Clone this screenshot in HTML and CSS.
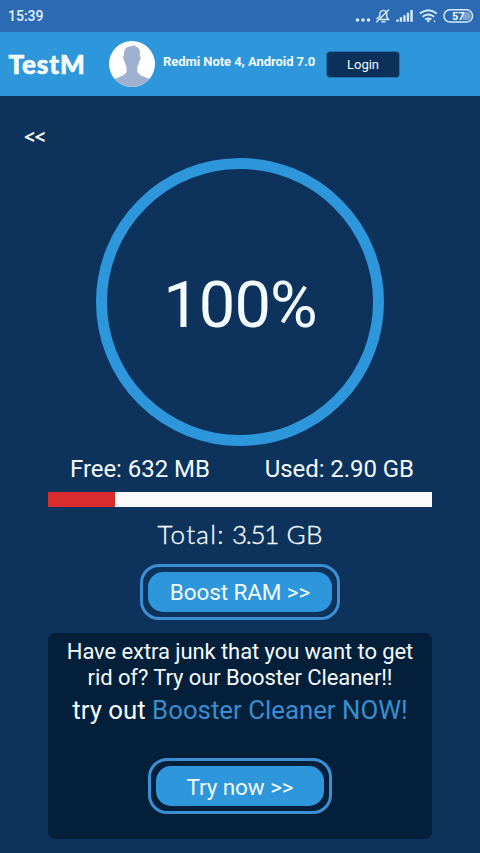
FILE: index.html
```html
<!DOCTYPE html>
<html lang="en">
<head>
<meta charset="utf-8">
<title>TestM</title>
<link rel="stylesheet" href="styles.css">
</head>
<body>
<div class="status">
  <span class="clock">15:39</span>
  <svg class="status-icons" width="120" height="32" viewBox="0 0 120 32" fill="none" stroke="#d5ecfb" stroke-width="1.5">
    <g fill="#d5ecfb" stroke="none"><circle cx="-0.500" cy="20" r="1.800"/><circle cx="5" cy="20" r="1.800"/><circle cx="10.500" cy="20" r="1.800"/></g>
    <path stroke-width="1.400" d="M22 19.500h8.500l-1.800-2.500v-3c0-2-1.200-3.400-3-3.600q-3.800.2-4 4v3.200M23.500 21.800h4M18.300 22.300L31 9.500M18.500 19.300l2.500-2.500"/>
    <g fill="#d5ecfb" stroke="none"><path d="M38.300 19.500h2.500v2.300h-2.500zM41.800 17.300h2.300v4.500h-2.300zM45.300 15.200h2.300v6.600h-2.300zM48.800 12.700h2.300v9.100h-2.300zM52.300 10h2.500v11.800h-2.500z"/></g>
    <path stroke-width="1.900" d="M61.800 13.600q8.500-6.800 17 0M64.500 16.800q5.800-4.600 11.600 0M67.200 19.600q3.100-2.200 6.200 0"/>
    <circle cx="70.300" cy="21" r="1.300" fill="#d5ecfb" stroke="none"/>
    <path stroke-width="1.200" d="M76.500 20.500v1.800"/>
    <rect x="86" y="9.800" width="28.500" height="12.200" rx="6"/>
    <path d="M105 12h5.500q2.500 1.500 2.500 4t-2.500 4H105z" fill="#7fa6d3" stroke="none"/>
    <text class="battery" x="94" y="20">57</text>
  </svg>
</div>
<header class="header">
  <div class="logo">TestM</div>
  <svg class="avatar" width="46" height="46" viewBox="0 0 46 46">
    <defs><clipPath id="disc"><circle cx="23" cy="23" r="23"/></clipPath></defs>
    <circle cx="23" cy="23" r="23" fill="#fff"/>
    <path clip-path="url(#disc)" fill="#9fb1d0" d="M15 14C14.500 8 18 5.500 22 5.300L26.500 4l-.3 1.400C30 6 31.500 9 30.800 15c1.200.4.8 3.500-.4 5-.6 2.800-1.300 4.600-2 5.500v5.500c2 4 8.500 5 12.500 7L46 46H0l5.500-8c4-2 10-3 12-7v-5.500c-.9-1.200-1.500-3-2-5.500-1.300-1-1.800-4.500-.5-6z"/>
  </svg>
  <div class="device">Redmi Note 4, Android 7.0</div>
  <div class="login">Login</div>
</header>
<main class="main">
  <div class="back">&lt;&lt;</div>
  <div class="ring"><span class="percent">100%</span></div>
  <div class="stats"><span class="free">Free: 632 MB</span><span class="used">Used: 2.90 GB</span></div>
  <div class="bar"><div class="fill"></div></div>
  <div class="total"><span class="label">Total:</span> <span class="amount">3.51</span> GB</div>
  <div class="button boost"><div class="face">Boost RAM &gt;&gt;</div></div>
  <section class="card">
    <p class="pitch">Have extra junk that you want to get<br>rid of? Try our Booster Cleaner!!</p>
    <p class="tryout">try out <span class="accent">Booster Cleaner NOW!</span></p>
    <div class="button try"><div class="face">Try now &gt;&gt;</div></div>
  </section>
</main>
</body>
</html>
```
FILE: styles.css
```css
* { box-sizing: border-box; }
body {
  margin: 0;
  width: 480px;
  height: 853px;
  overflow: hidden;
  background: #0d325b;
  color: #f4fbff;
  font-family: Roboto, sans-serif;
}
.status {
  display: flex;
  justify-content: space-between;
  height: 32px;
  padding: 0 2px 0 8px;
  background: #2c6ab4;
}
.clock { font-size: 14px; font-weight: 500; line-height: 33px; color: #e0f3ff; }
.status-icons { display: block; overflow: visible; }
.battery { font: 700 11px Roboto, sans-serif; fill: #f4fbff; stroke: none; }
.header {
  display: flex;
  align-items: center;
  height: 64px;
  padding-left: 8px;
  background: #2e96db;
}
.logo {
  width: 101px;
  padding-left: 0.5px;
  font: 900 26px/64px Lato, sans-serif;
  letter-spacing: 0.9px;
  -webkit-text-stroke: 0.6px #f4fbff;
  white-space: nowrap;
}
.avatar { display: block; flex: none; }
.device {
  width: 171px;
  padding: 0 0 5px 8px;
  font-size: 13px;
  font-weight: 700;
  letter-spacing: -0.05px;
  white-space: nowrap;
}
.login {
  width: 74px;
  height: 27px;
  border: 1px solid #2472ae;
  border-radius: 4px;
  background: #0b315b;
  font-size: 13px;
  line-height: 26px;
  text-align: center;
}
.main { display: flex; flex-direction: column; align-items: center; }
.back {
  align-self: flex-start;
  height: 62px;
  padding: 25px 0 0 24px;
  font: 700 19px/32px "Open Sans", sans-serif;
  letter-spacing: -0.4px;
}
.ring {
  display: grid;
  place-items: center;
  width: 288px;
  height: 288px;
  border: 11px solid #2e96db;
  border-radius: 50%;
}
.percent { font-size: 65px; line-height: 76px; margin-top: 6px; letter-spacing: -0.9px; }
.stats {
  display: flex;
  justify-content: space-between;
  width: 344px;
  height: 46px;
  padding-left: 2px;
  font-size: 24px;
  line-height: 46px;
  letter-spacing: -0.05px;
}
.used { margin-right: -2px; }
.bar { width: 384px; height: 15px; background: #fafafa; }
.fill { width: 67px; height: 15px; background: #d92d2d; }
.total {
  height: 57px;
  font: 300 26px/55px Lato, sans-serif;
  letter-spacing: 0.2px;
  -webkit-text-stroke: 0.35px #f4fbff;
}
.label { letter-spacing: 1.3px; }
.amount { letter-spacing: -1.4px; margin-right: 1.5px; }
.button {
  padding: 5px;
  border: 3px solid #3c8fd3;
  border-radius: 19px;
  height: 56px;
}
.face {
  height: 40px;
  border-radius: 15px;
  background: #2e96db;
  font-size: 22.500px;
  line-height: 41px;
  letter-spacing: -0.1px;
  text-align: center;
}
.boost { width: 200px; }
.card {
  display: flex;
  flex-direction: column;
  align-items: center;
  width: 384px;
  height: 206px;
  margin-top: 12.5px;
  padding-top: 6px;
  border-radius: 7px;
  background: #041f39;
  white-space: nowrap;
}
.pitch { margin: 0; font-size: 22px; line-height: 26px; letter-spacing: -0.08px; text-align: center; }
.tryout { margin: 0; height: 67.5px; font-size: 25.8px; line-height: 39px; }
.accent { color: #388fd0; }
.try { width: 184px; }
.try .face { line-height: 42px; }
```
